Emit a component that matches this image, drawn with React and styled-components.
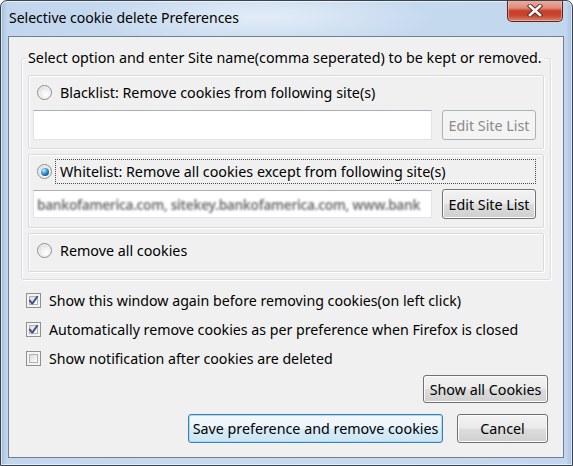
import React from 'react';
import styled, { createGlobalStyle } from 'styled-components';

const FONT = `"Noto Sans", "Open Sans", "DejaVu Sans", sans-serif`;

const Global = createGlobalStyle`
  html, body { margin: 0; padding: 0; background: #ffffff; }
  body { width: 573px; height: 466px; overflow: hidden; }
  *, *::before, *::after { box-sizing: border-box; }
`;

const Window = styled.div`
  width: 573px;
  height: 466px;
  display: flex;
  flex-direction: column;
  border: 1px solid #39434e;
  border-radius: 7px 7px 0 0;
  background:
    radial-gradient(ellipse 180px 30px at 260px 16px, rgba(255,255,255,0.5), rgba(255,255,255,0) 100%),
    linear-gradient(90deg, #a3bedc 0px, #c2d6ed 6px, #c6daef 50%, #c2d6ed calc(100% - 6px), #a6c0dd 100%);
  box-shadow: inset 0 0 0 1px rgba(255, 255, 255, 0.6);
  font-family: ${FONT};
  overflow: hidden;
`;

const TitleBar = styled.div`
  height: 35px;
  flex: none;
  display: flex;
  align-items: flex-start;
  justify-content: space-between;
  padding-left: 8px;
`;

const Title = styled.div`
  font-size: 14px;
  line-height: 34px;
  color: #000;
`;

const CloseButton = styled.div`
  width: 56px;
  height: 22px;
  margin-top: -1px;
  margin-right: 9px;
  display: flex;
  align-items: center;
  justify-content: center;
  border: 1px solid #5a2620;
  border-top: none;
  border-radius: 0 0 5px 5px;
  background: linear-gradient(180deg, #eeb1a3 0%, #de8a79 38%, #c63f2a 52%, #c8452f 75%, #dc8672 100%);
  box-shadow: inset 0 0 0 1px rgba(255, 220, 210, 0.45);
`;

const Client = styled.div`
  flex: 1;
  margin: 0 8px 7px 7px;
  display: flex;
  flex-direction: column;
  background: #f0f0f0;
  border: 1px solid #6f8094;
  padding: 11px 12px 0 12px;
`;

const GroupBox = styled.fieldset`
  margin: 0;
  padding: 7px 6px 7px 6px;
  border: 1px solid #d5dfe5;
  border-radius: 3px;
  box-shadow: inset 1px 1px 0 #ffffff, 1px 1px 0 #ffffff;
  display: flex;
  flex-direction: column;
  gap: 5px;
  min-width: 0;
`;

const Legend = styled.legend`
  margin-left: -2px;
  padding: 0 2px;
  font-size: 14.3px;
  line-height: 20px;
  color: #000;
`;

const Panel = styled.div`
  display: flex;
  flex-direction: column;
  gap: 5px;
  padding: 4px 7px 8px 4px;
  border: 1px solid #dadada;
  border-radius: 2px;
  box-shadow: inset 1px 1px 0 #ffffff, 1px 1px 0 #ffffff;
`;

const OptionRow = styled.div`
  height: 25px;
  display: flex;
  align-items: center;
  gap: 3px;
  padding-left: 4px;
`;

const Radio = styled.span`
  position: relative;
  flex: none;
  width: 15px;
  height: 15px;
  border-radius: 50%;
  border: 1px solid #8d8e8f;
  background: radial-gradient(circle at 60% 65%, #ffffff 0%, #f2f2f2 35%, #cfcfcf 100%);
  box-shadow: inset 0 0 0 1px #f4f4f4;
  &::after {
    content: '';
    display: ${p => (p.$checked ? 'block' : 'none')};
    position: absolute;
    left: 2.5px;
    top: 2.5px;
    width: 8px;
    height: 8px;
    border-radius: 50%;
    background: radial-gradient(circle at 35% 30%, #c4ecff 0%, #4aa9e2 35%, #145c97 72%, #0d4274 100%);
  }
`;

const OptionLabel = styled.span`
  flex: ${p => (p.$focused ? 1 : 'none')};
  height: 25px;
  display: flex;
  align-items: center;
  padding: 0 4px;
  font-size: 14.3px;
  color: #000;
  border: 1px dotted ${p => (p.$focused ? '#4a4a4a' : 'transparent')};
`;

const InputRow = styled.div`
  height: 30px;
  display: flex;
  align-items: center;
  gap: 10px;
`;

const TextField = styled.div`
  flex: 1;
  height: ${p => (p.$tall ? 30 : 28)}px;
  min-width: 0;
  display: flex;
  align-items: center;
  padding: 0 3px;
  background: #ffffff;
  border: 1px solid #e2e3ea;
  border-top-color: #abadb3;
  overflow: hidden;
`;

const BlurredText = styled.span`
  white-space: nowrap;
  font-size: 13.6px;
  font-weight: 600;
  color: #6f6f6f;
  filter: blur(1px);
  letter-spacing: -0.3px;
`;

const Button = styled.div`
  flex: none;
  width: ${p => p.$w}px;
  height: ${p => p.$h}px;
  display: flex;
  align-items: center;
  justify-content: center;
  font-size: 14.3px;
  border-radius: 3px;
  color: ${p => (p.$disabled ? '#8a8a8a' : '#000')};
  border: 1px solid ${p => (p.$disabled ? '#adb2b5' : p.$default ? '#3c7fb1' : '#707070')};
  background: ${p =>
    p.$disabled
      ? '#f4f4f4'
      : p.$default
      ? 'linear-gradient(180deg, #f2f9fd 0%, #eaf5fc 48%, #d8ecf8 52%, #cbe5f5 100%)'
      : 'linear-gradient(180deg, #f2f2f2 0%, #ebebeb 48%, #dddddd 52%, #cfcfcf 100%)'};
  box-shadow: inset 0 0 0 1px ${p => (p.$disabled ? '#f4f4f4' : p.$default ? '#a9dbf6' : '#fcfcfc')};
`;

const CheckList = styled.div`
  margin-top: 9px;
  display: flex;
  flex-direction: column;
  gap: 7px;
  padding-left: 5px;
`;

const CheckRow = styled.div`
  height: 22px;
  display: flex;
  align-items: center;
  gap: 8px;
  font-size: 14.2px;
  color: #000;
`;

const Checkbox = styled.span`
  flex: none;
  width: 15px;
  height: 15px;
  display: flex;
  align-items: center;
  justify-content: center;
  border: 1px solid #8e8f8f;
  background: #f4f4f4;
  position: relative;
  &::before {
    content: '';
    position: absolute;
    inset: 2px;
    border: 1px solid #b1b1b1;
    background: linear-gradient(135deg, #dcdcdc 0%, #f0f0f0 60%, #ffffff 100%);
  }
  svg { position: relative; }
`;

const RightRow = styled.div`
  display: flex;
  justify-content: flex-end;
  gap: 14px;
  margin-top: ${p => p.$mt}px;
  padding-right: 3px;
`;

const XIcon = () => (
  <svg width="16" height="13" viewBox="0 0 16 13">
    <path d="M3 2 L13 11 M13 2 L3 11" stroke="#5b2a22" strokeWidth="4.4" strokeLinecap="square" fill="none" />
    <path d="M3 2 L13 11 M13 2 L3 11" stroke="#ffffff" strokeWidth="2.6" strokeLinecap="square" fill="none" />
  </svg>
);

const Check = () => (
  <svg width="11" height="11" viewBox="0 0 11 11">
    <path d="M1.8 5.6 L4.3 8.6 L9.2 1.8" stroke="#3b4f8f" strokeWidth="1.9" fill="none" strokeLinecap="round" strokeLinejoin="round" />
  </svg>
);

const options = [
  { label: 'Blacklist: Remove cookies from following site(s)', checked: false, input: 'empty' },
  { label: 'Whitelist: Remove all cookies except from following site(s)', checked: true, input: 'filled' },
  { label: 'Remove all cookies', checked: false, input: null },
];

const checks = [
  { label: 'Show this window again before removing cookies(on left click)', checked: true },
  { label: 'Automatically remove cookies as per preference when Firefox is closed', checked: true },
  { label: 'Show notification after cookies are deleted', checked: false },
];

export default function App() {
  return (
    <>
      <Global />
      <Window>
        <TitleBar>
          <Title>Selective cookie delete Preferences</Title>
          <CloseButton>
            <XIcon />
          </CloseButton>
        </TitleBar>
        <Client>
          <GroupBox>
            <Legend>Select option and enter Site name(comma seperated) to be kept or removed.</Legend>
            {options.map(o => (
              <Panel key={o.label}>
                <OptionRow>
                  <Radio $checked={o.checked} />
                  <OptionLabel $focused={o.checked}>{o.label}</OptionLabel>
                </OptionRow>
                {o.input && (
                  <InputRow>
                    <TextField $tall={o.input === 'empty'}>
                      {o.input === 'filled' && (
                        <BlurredText>bankofamerica.com, sitekey.bankofamerica.com, www.bank</BlurredText>
                      )}
                    </TextField>
                    <Button $w={94} $h={30} $disabled={o.input === 'empty'}>
                      Edit Site List
                    </Button>
                  </InputRow>
                )}
              </Panel>
            ))}
          </GroupBox>
          <CheckList>
            {checks.map(c => (
              <CheckRow key={c.label}>
                <Checkbox>{c.checked && <Check />}</Checkbox>
                {c.label}
              </CheckRow>
            ))}
          </CheckList>
          <RightRow $mt={6}>
            <Button $w={125} $h={28}>Show all Cookies</Button>
          </RightRow>
          <RightRow $mt={11}>
            <Button $w={255} $h={29} $default>Save preference and remove cookies</Button>
            <Button $w={91} $h={29}>Cancel</Button>
          </RightRow>
        </Client>
      </Window>
    </>
  );
}
